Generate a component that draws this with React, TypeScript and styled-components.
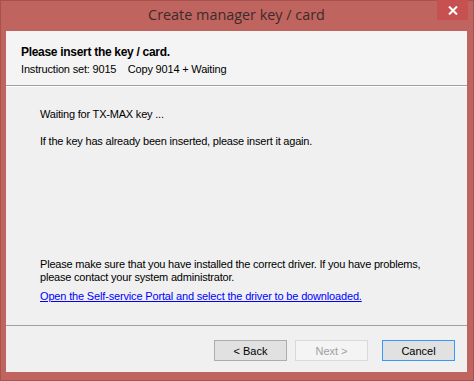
import styled, { createGlobalStyle } from 'styled-components';

const GlobalStyle = createGlobalStyle`
  html, body {
    margin: 0;
    padding: 0;
    background: #c0645f;
  }
  body {
    font-family: "Liberation Sans", Arial, sans-serif;
  }
`;

const Window = styled.div`
  width: 474px;
  height: 381px;
  box-sizing: border-box;
  border: 1px solid #a8524e;
  background: #c0645f;
  display: flex;
  flex-direction: column;
  padding: 0 6px 8px 5px;
`;

const TitleBar = styled.div`
  height: 30px;
  flex: none;
  display: flex;
  align-items: center;
  justify-content: center;
  position: relative;
`;

const Title = styled.div`
  font-family: "Open Sans", "Noto Sans", sans-serif;
  font-size: 14.4px;
  color: #3c2b2a;
  margin-top: -4px;
`;

const CloseButton = styled.div`
  position: absolute;
  right: -1px;
  top: -1px;
  width: 31px;
  height: 20px;
  background: #c75050;
  display: flex;
  align-items: center;
  justify-content: center;
`;

const Client = styled.div`
  flex: 1;
  background: #f0f0f0;
  display: flex;
  flex-direction: column;
`;

const Header = styled.div`
  height: 55px;
  flex: none;
  background: #f4f4f4;
  border-bottom: 1px solid #a0a0a0;
  box-shadow: 0 1px 0 #ffffff;
  padding: 14px 0 0 15px;
  box-sizing: border-box;
`;

const HeaderTitle = styled.div`
  font-weight: bold;
  font-size: 12px;
  letter-spacing: -0.3px;
  color: #000;
  line-height: 14px;
`;

const HeaderInfo = styled.div`
  font-size: 11px;
  letter-spacing: -0.18px;
  color: #000;
  margin-top: 4px;
  line-height: 13px;
  white-space: pre;
`;

const Body = styled.div`
  flex: 1;
  padding: 22px 20px 0 34px;
  display: flex;
  flex-direction: column;
  font-size: 11px;
  letter-spacing: -0.2px;
  color: #000;
  line-height: 13px;
`;

const Line = styled.div<{ gap?: number }>`
  margin-top: ${(p) => p.gap ?? 0}px;
`;

const Spacer = styled.div`
  flex: 1;
`;

const Link = styled.a`
  color: #0000ff;
  text-decoration: underline;
  letter-spacing: -0.16px;
  margin-top: 6px;
  margin-bottom: 22px;
`;

const Footer = styled.div`
  height: 47px;
  flex: none;
  border-top: 1px solid #a0a0a0;
  display: flex;
  justify-content: flex-end;
  align-items: flex-start;
  padding: 14px 12px 0 0;
  box-sizing: border-box;
  gap: 8px;
`;

const Button = styled.button<{ focused?: boolean; spaced?: boolean }>`
  width: 73px;
  height: 21px;
  box-sizing: border-box;
  font-family: "Liberation Sans", Arial, sans-serif;
  font-size: 11px;
  padding: 0;
  margin-right: ${(p) => (p.spaced ? 6 : 0)}px;
  border: 1px solid ${(p) => (p.focused ? '#3399ff' : '#adadad')};
  background: #e1e1e1;
  color: #000;
  &:disabled {
    background: #f4f4f4;
    border-color: #d9d9d9;
    color: #a0a0a0;
  }
`;

export default function App() {
  return (
    <>
      <GlobalStyle />
      <Window>
        <TitleBar>
          <Title>Create manager key / card</Title>
          <CloseButton>
            <svg width="10" height="9" viewBox="0 0 10 9">
              <path d="M1 0.5 L9 8.5 M9 0.5 L1 8.5" stroke="#fff" strokeWidth="2" />
            </svg>
          </CloseButton>
        </TitleBar>
        <Client>
          <Header>
            <HeaderTitle>Please insert the key / card.</HeaderTitle>
            <HeaderInfo>Instruction set: 9015    Copy 9014 + Waiting</HeaderInfo>
          </Header>
          <Body>
            <Line>Waiting for TX-MAX key ...</Line>
            <Line gap={14}>If the key has already been inserted, please insert it again.</Line>
            <Spacer />
            <Line>
              Please make sure that you have installed the correct driver. If you have problems,
              <br />
              please contact your system administrator.
            </Line>
            <Link href="#">Open the Self-service Portal and select the driver to be downloaded.</Link>
          </Body>
          <Footer>
            <Button>&lt; Back</Button>
            <Button disabled spaced>Next &gt;</Button>
            <Button focused>Cancel</Button>
          </Footer>
        </Client>
      </Window>
    </>
  );
}
